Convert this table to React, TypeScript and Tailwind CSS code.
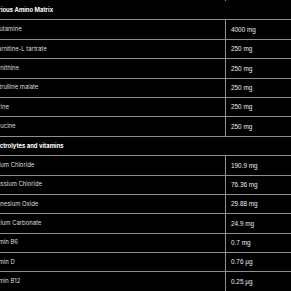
import React from 'react';

type Row = { label: string; value?: string; header?: boolean };

const rows: Row[] = [
  { label: 'Various Amino Matrix', header: true },
  { label: 'L-Glutamine', value: '4000 mg' },
  { label: 'L-Carnitine-L tartrate', value: '250 mg' },
  { label: 'L-Ornithine', value: '250 mg' },
  { label: 'L-Citrulline malate', value: '250 mg' },
  { label: 'Taurine', value: '250 mg' },
  { label: 'L-Leucine', value: '250 mg' },
  { label: 'Electrolytes and vitamins', header: true },
  { label: 'Sodium Chloride', value: '190.9 mg' },
  { label: 'Potassium Chloride', value: '76.36 mg' },
  { label: 'Magnesium Oxide', value: '29.88 mg' },
  { label: 'Calcium Carbonate', value: '24.9 mg' },
  { label: 'Vitamin B6', value: '0.7 mg' },
  { label: 'Vitamin D', value: '0.76 µg' },
  { label: 'Vitamin B12', value: '0.25 µg' },
];

export default function App() {
  return (
    <div className="w-[291px] h-[291px] overflow-hidden bg-black">
      <div className="flex flex-col -ml-[12px] w-[310px]">
        <div className="flex h-px">
          <div className="w-[238px] shrink-0 border-r border-[#8f8f8f]" />
        </div>
        {rows.map((r) =>
          r.header ? (
            <div
              key={r.label}
              className="flex items-center h-[19.4px] border-b border-[#8f8f8f] pl-[3px] text-[5.9px] font-bold text-white font-['Inter',sans-serif]"
            >
              {r.label}
            </div>
          ) : (
            <div key={r.label} className="flex h-[19.4px] border-b border-[#8f8f8f]">
              <div className="w-[238px] shrink-0 border-r border-[#8f8f8f] flex items-center text-[5.9px] text-[#dedede] font-['Inter',sans-serif]">
                {r.label}
              </div>
              <div className="flex-1 flex items-center pl-[5px] text-[6.4px] text-[#ececec] font-['Liberation_Sans',Arial,sans-serif]">
                {r.value}
              </div>
            </div>
          )
        )}
      </div>
    </div>
  );
}
